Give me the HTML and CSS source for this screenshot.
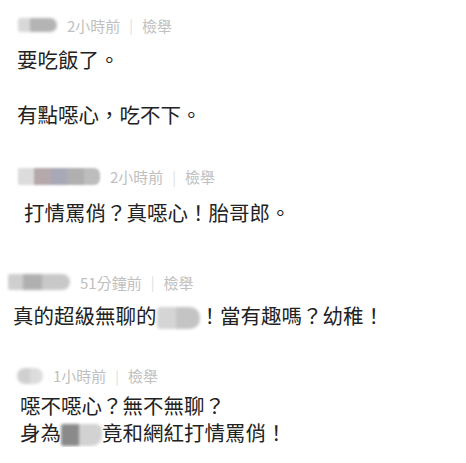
FILE: index.html
```html
<!DOCTYPE html>
<html lang="zh-Hant">
<head>
<meta charset="utf-8">
<title>留言</title>
<link rel="stylesheet" href="styles.css">
</head>
<body>
<div class="list">
  <div class="comment c1">
    <div class="meta">
      <span class="blob blob1"></span>
      <span class="time">2小時前</span>
      <span class="sep">|</span>
      <span class="report">檢舉</span>
    </div>
    <div class="text">要吃飯了。<br><br>有點噁心，吃不下。</div>
  </div>
  <div class="comment c2">
    <div class="meta">
      <span class="blob blob2"><i class="s a"></i><i class="s b"></i><i class="s c"></i><i class="s d"></i><i class="s e"></i></span>
      <span class="time">2小時前</span>
      <span class="sep">|</span>
      <span class="report">檢舉</span>
    </div>
    <div class="text t2">打情罵俏？真噁心！胎哥郎。</div>
  </div>
  <div class="comment c3">
    <div class="meta">
      <span class="blob blob3"></span>
      <span class="time">51分鐘前</span>
      <span class="sep">|</span>
      <span class="report">檢舉</span>
    </div>
    <div class="text">真的超級無聊的<span class="inblur ib1"></span>！當有趣嗎？幼稚！</div>
  </div>
  <div class="comment c4">
    <div class="meta">
      <span class="blob blob4"></span>
      <span class="time">1小時前</span>
      <span class="sep">|</span>
      <span class="report">檢舉</span>
    </div>
    <div class="text">噁不噁心？無不無聊？<br>身為<span class="inblur ib2"></span>竟和網紅打情罵俏！</div>
  </div>
</div>
</body>
</html>
```
FILE: styles.css
```css
html, body {
  margin: 0;
  padding: 0;
  background: #ffffff;
}
body {
  font-family: "Noto Sans CJK TC", "Noto Sans", sans-serif;
  color: #222222;
}
.list {
  display: flex;
  flex-direction: column;
}
.meta {
  display: flex;
  align-items: center;
  height: 20px;
  font-size: 15px;
  color: #c0c0c0;
  white-space: nowrap;
}
.time {
  margin-left: 10px;
}
.sep {
  margin: 0 9px;
  color: #dedede;
  font-size: 14px;
}
.text {
  font-size: 20.5px;
  line-height: 27.5px;
  white-space: nowrap;
}
.blob {
  display: inline-block;
  height: 14px;
  filter: blur(1.5px);
}
.c1 { padding-top: 15px; }
.c1 .meta { padding-left: 18px; }
.c1 .text { padding-left: 17px; margin-top: 11px; }
.blob1 {
  width: 39px;
  background: linear-gradient(90deg, #d8d8d8 0 30%, #b4b4b4 30% 100%);
  border-radius: 3px 8px 8px 3px;
}
.c2 { margin-top: 38px; }
.c2 .meta { padding-left: 18px; }
.c2 .text { padding-left: 24px; margin-top: 12px; }
.blob2 {
  width: 82px;
  height: 17px;
  display: flex;
  filter: blur(1.2px);
}
.s { flex: 1; height: 100%; }
.s.a { background: #dcdcdc; }
.s.b { background: #b5a9ab; }
.s.c { background: #a7a9b6; }
.s.d { background: #b0b0b0; }
.s.e { background: #bdbdbd; border-radius: 0 6px 6px 0; }
.c3 { margin-top: 46px; }
.c3 .meta { padding-left: 8px; }
.c3 .text { padding-left: 13px; margin-top: 10px; }
.blob3 {
  width: 62px;
  height: 16px;
  background: linear-gradient(90deg, #cfcfcf 0 25%, #b0b0b0 25% 55%, #c8c8c8 55% 100%);
  border-radius: 2px 8px 8px 2px;
}
.inblur {
  display: inline-block;
  vertical-align: middle;
  filter: blur(1.5px);
}
.ib1 {
  width: 43px;
  height: 22px;
  background: linear-gradient(90deg, #d5d5d5 0 45%, #c4c4c4 45% 100%);
  border-radius: 4px 10px 10px 4px;
}
.c4 { margin-top: 36px; }
.c4 .meta { padding-left: 17px; }
.c4 .text { padding-left: 20px; margin-top: 6px; }
.blob4 {
  width: 26px;
  height: 16px;
  background: linear-gradient(90deg, #d0d0d0 0 50%, #dcdcdc 50% 100%);
  border-radius: 8px;
}
.ib2 {
  width: 41px;
  height: 22px;
  background: linear-gradient(90deg, #8a8a8a 0 45%, #d2d2d2 45% 100%);
  border-radius: 2px 6px 10px 2px;
}
```
